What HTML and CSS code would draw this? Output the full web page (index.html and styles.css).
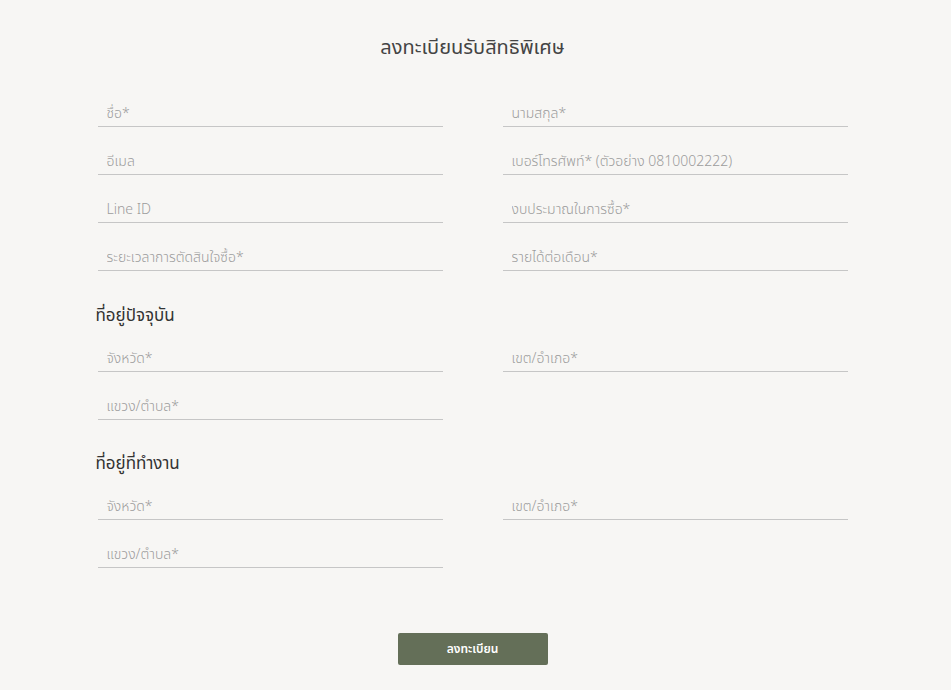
FILE: index.html
```html
<!DOCTYPE html>
<html lang="th">
<head>
<meta charset="utf-8">
<title>ลงทะเบียนรับสิทธิพิเศษ</title>
<link rel="stylesheet" href="styles.css">
</head>
<body>
<main class="page">
  <h1 class="title">ลงทะเบียนรับสิทธิพิเศษ</h1>
  <form class="form">
    <div class="grid">
      <input class="field" type="text" placeholder="ชื่อ*">
      <input class="field" type="text" placeholder="นามสกุล*">
      <input class="field" type="text" placeholder="อีเมล">
      <input class="field" type="text" placeholder="เบอร์โทรศัพท์* (ตัวอย่าง 0810002222)">
      <input class="field" type="text" placeholder="Line ID">
      <input class="field" type="text" placeholder="งบประมาณในการซื้อ*">
      <input class="field" type="text" placeholder="ระยะเวลาการตัดสินใจซื้อ*">
      <input class="field" type="text" placeholder="รายได้ต่อเดือน*">
    </div>
    <h2 class="section">ที่อยู่ปัจจุบัน</h2>
    <div class="grid">
      <input class="field" type="text" placeholder="จังหวัด*">
      <input class="field" type="text" placeholder="เขต/อำเภอ*">
      <input class="field" type="text" placeholder="แขวง/ตำบล*">
    </div>
    <h2 class="section section-work">ที่อยู่ที่ทำงาน</h2>
    <div class="grid">
      <input class="field" type="text" placeholder="จังหวัด*">
      <input class="field" type="text" placeholder="เขต/อำเภอ*">
      <input class="field" type="text" placeholder="แขวง/ตำบล*">
    </div>
    <div class="actions">
      <button class="submit" type="button">ลงทะเบียน</button>
    </div>
  </form>
</main>
</body>
</html>
```
FILE: styles.css
```css
* { box-sizing: border-box; }
html, body {
  margin: 0;
  background: #f7f6f4;
}
body {
  font-family: "Noto Sans Thai", "Noto Sans", "DejaVu Sans", sans-serif;
  color: #333;
  min-height: 690px;
}
.page {
  width: 750px;
  margin: 0 auto;
  position: relative;
  left: -3px;
}
.title {
  margin: 33px 0 32px;
  text-align: center;
  font-size: 20px;
  line-height: 30px;
  font-weight: 400;
  color: #444;
}
.form { margin: 0; }
.grid {
  display: grid;
  grid-template-columns: 345px 345px;
  column-gap: 60px;
  row-gap: 16px;
}
.field {
  display: block;
  width: 100%;
  height: 32px;
  padding: 6px 9px 0;
  border: none;
  border-bottom: 1px solid #c6c6c6;
  background: transparent;
  font-family: inherit;
  font-size: 14px;
  font-weight: 300;
  color: #555;
  outline: none;
}
.field::placeholder { color: #9c9c9c; }
.section {
  margin: 33px 0 12px -2px;
  font-size: 17px;
  line-height: 24px;
  font-weight: 400;
  color: #333;
}
.section-work { margin-top: 32px; }
.actions {
  display: flex;
  justify-content: center;
  margin-top: 65px;
}
.submit {
  width: 150px;
  height: 32px;
  border: none;
  border-radius: 2px;
  background: #646f58;
  color: #fff;
  font-family: inherit;
  font-size: 12px;
  font-weight: 600;
}
```
